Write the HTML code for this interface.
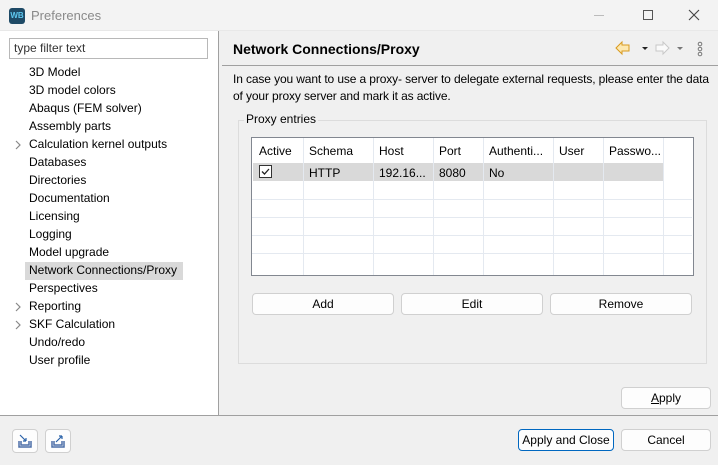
<!DOCTYPE html><html><head><style>
*{margin:0;padding:0;box-sizing:border-box}
body{width:718px;height:465px;background:#f0f0f0;font-family:"Liberation Sans",sans-serif;font-size:12px;color:#000;position:relative;overflow:hidden}
.a{position:absolute;white-space:nowrap}
.btn{position:absolute;background:#fdfdfd;border:1px solid #d0d0d0;border-radius:4px;text-align:center;line-height:20px;height:22px}
.it{position:absolute;left:29px;height:18px;line-height:18px}
.vl{position:absolute;width:1px;background:#e4e9f0}
.hl{position:absolute;height:1px;background:#e4e9f0;left:252px;width:440px}
</style></head><body>
<div class="a" style="left:0;top:0;width:718px;height:31px;background:#f3f3f3;border-bottom:1px solid #e8e8e8"></div>
<div class="a" style="left:9px;top:8px;width:16px;height:16px;background:#1e4a66;border-radius:3px;color:#5ec8f0;font-size:8px;font-weight:bold;line-height:16px;text-align:center">WB</div>
<div class="a" style="left:31px;top:8px;color:#8a8a8a;font-size:13px">Preferences</div>
<div class="a" style="left:594px;top:15px;width:10px;height:1px;background:#bbb"></div>
<div class="a" style="left:643px;top:10px;width:10px;height:10px;border:1px solid #555"></div>
<svg class="a" style="left:688px;top:9px" width="12" height="12"><path d="M1 1 L11 11 M11 1 L1 11" stroke="#444" stroke-width="1.1"/></svg>
<div class="a" style="left:0;top:31px;width:219px;height:385px;background:#fff;border-right:1px solid #a0a0a0"></div>
<div class="a" style="left:9px;top:38px;width:199px;height:21px;border:1px solid #b8b8b8;padding-left:4px;line-height:19px;color:#333">type filter text</div>
<div class="a" style="left:25px;top:262px;width:158px;height:18px;background:#d9d9d9"></div>
<div class="it" style="top:63px">3D Model</div>
<div class="it" style="top:81px">3D model colors</div>
<div class="it" style="top:99px">Abaqus (FEM solver)</div>
<div class="it" style="top:117px">Assembly parts</div>
<div class="it" style="top:135px">Calculation kernel outputs</div>
<div class="it" style="top:153px">Databases</div>
<div class="it" style="top:171px">Directories</div>
<div class="it" style="top:189px">Documentation</div>
<div class="it" style="top:207px">Licensing</div>
<div class="it" style="top:225px">Logging</div>
<div class="it" style="top:243px">Model upgrade</div>
<div class="it" style="top:261px">Network Connections/Proxy</div>
<div class="it" style="top:279px">Perspectives</div>
<div class="it" style="top:297px">Reporting</div>
<div class="it" style="top:315px">SKF Calculation</div>
<div class="it" style="top:333px">Undo/redo</div>
<div class="it" style="top:351px">User profile</div>
<svg class="a" style="left:14px;top:140px" width="8" height="10"><path d="M2 1 L6 5 L2 9" fill="none" stroke="#888" stroke-width="1.2"/></svg>
<svg class="a" style="left:14px;top:302px" width="8" height="10"><path d="M2 1 L6 5 L2 9" fill="none" stroke="#888" stroke-width="1.2"/></svg>
<svg class="a" style="left:14px;top:320px" width="8" height="10"><path d="M2 1 L6 5 L2 9" fill="none" stroke="#888" stroke-width="1.2"/></svg>
<div class="a" style="left:233px;top:41px;font-size:14px;font-weight:bold">Network Connections/Proxy</div>
<svg class="a" style="left:614px;top:40px" width="100" height="18"><path d="M2 8 L8 2 V5 H15 V11 H8 V14 Z" fill="#fde8b0" stroke="#d99a1e"/><path d="M28 7 h6 l-3 3z" fill="#222"/><path d="M55 8 L49 2 V5 H42 V11 H49 V14 Z" fill="#fafafa" stroke="#c8c8c8"/><path d="M63 7 h6 l-3 3z" fill="#777"/><circle cx="86" cy="4" r="1.8" fill="none" stroke="#777"/><circle cx="86" cy="9" r="1.8" fill="none" stroke="#777"/><circle cx="86" cy="14" r="1.8" fill="none" stroke="#777"/></svg>
<div class="a" style="left:222px;top:65px;width:496px;height:1px;background:#a0a0a0"></div>
<div class="a" style="left:233px;top:71px;line-height:17px;letter-spacing:-0.12px">In case you want to use a proxy- server to delegate external requests, please enter the data<br>of your proxy server and mark it as active.</div>
<div class="a" style="left:238px;top:120px;width:469px;height:244px;border:1px solid #dcdcdc"></div>
<div class="a" style="left:244px;top:112px;background:#f0f0f0;padding:0 2px">Proxy entries</div>
<div class="a" style="left:251px;top:137px;width:443px;height:139px;background:#fff;border:1px solid #828790"></div>
<div class="a" style="left:253px;top:163px;width:410px;height:18px;background:#d9d9d9"></div>
<div class="hl" style="top:199px"></div><div class="hl" style="top:217px"></div><div class="hl" style="top:235px"></div><div class="hl" style="top:253px"></div>
<div class="vl" style="left:303px;top:138px;height:137px"></div>
<div class="vl" style="left:373px;top:138px;height:137px"></div>
<div class="vl" style="left:433px;top:138px;height:137px"></div>
<div class="vl" style="left:483px;top:138px;height:137px"></div>
<div class="vl" style="left:553px;top:138px;height:137px"></div>
<div class="vl" style="left:603px;top:138px;height:137px"></div>
<div class="vl" style="left:663px;top:138px;height:137px"></div>
<div class="a" style="left:259px;top:144px">Active</div><div class="a" style="left:309px;top:144px">Schema</div><div class="a" style="left:379px;top:144px">Host</div><div class="a" style="left:439px;top:144px">Port</div><div class="a" style="left:489px;top:144px">Authenti...</div><div class="a" style="left:559px;top:144px">User</div><div class="a" style="left:609px;top:144px">Passwo...</div>
<div class="a" style="left:259px;top:165px;width:13px;height:13px;border:1px solid #333;background:#fff"><svg width="11" height="11" style="position:absolute;left:0;top:0"><path d="M2 5.5 L4.5 8 L9 3" fill="none" stroke="#222" stroke-width="1.3"/></svg></div>
<div class="a" style="left:309px;top:166px">HTTP</div><div class="a" style="left:379px;top:166px">192.16...</div><div class="a" style="left:439px;top:166px">8080</div><div class="a" style="left:489px;top:166px">No</div>
<div class="btn" style="left:252px;top:293px;width:142px">Add</div>
<div class="btn" style="left:401px;top:293px;width:142px">Edit</div>
<div class="btn" style="left:550px;top:293px;width:142px">Remove</div>
<div class="btn" style="left:621px;top:387px;width:90px"><u>A</u>pply</div>
<div class="a" style="left:0;top:415px;width:718px;height:1px;background:#a0a0a0"></div>
<div class="btn" style="left:518px;top:429px;width:96px;border-color:#0067c0">Apply and Close</div>
<div class="btn" style="left:621px;top:429px;width:90px">Cancel</div>
<div class="btn" style="left:12px;top:429px;width:26px;height:24px"></div>
<div class="btn" style="left:45px;top:429px;width:26px;height:24px"></div>
<svg class="a" style="left:16px;top:432px" width="60" height="18"><path d="M3 9 V15 H15 V9 M5 9 v4 h8 v-4" fill="none" stroke="#4d6fa8" stroke-width="1.5"/><path d="M4 3 L10 9 M10 9 h-3 M10 9 v-3" stroke="#2a62a8" stroke-width="1.2" fill="none"/><path d="M36 9 V15 H48 V9 M38 9 v4 h8 v-4" fill="none" stroke="#4d6fa8" stroke-width="1.5"/><path d="M40 10 L46 4 M46 4 h-3 M46 4 v3" stroke="#2a62a8" stroke-width="1.2" fill="none"/></svg>
</body></html>
